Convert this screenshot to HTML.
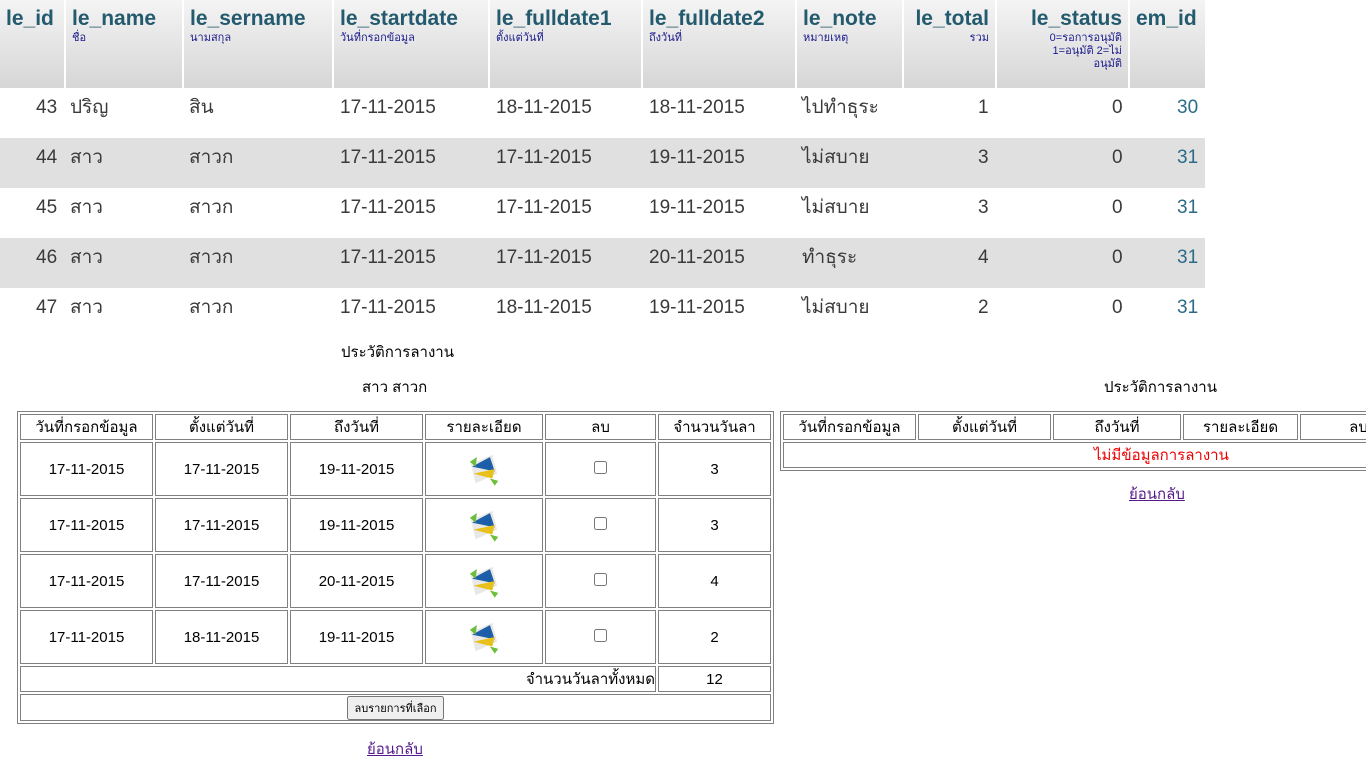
<!DOCTYPE html>
<html><head><meta charset="utf-8">
<style>
*{box-sizing:border-box}
body{margin:0;width:1366px;height:768px;overflow:hidden;background:#fff;font-family:"Liberation Sans","DejaVu Sans",sans-serif;position:relative}
.a{position:absolute}
.hd{position:absolute;top:0;height:88px;background:linear-gradient(#f4f4f4,#d6d6d6);color:#235a6e;font-weight:bold;font-size:21px;padding:6px 6px 0 6px;line-height:26px;white-space:nowrap}
.hd small{display:block;font-size:11px;color:#1a1a8c;font-weight:normal;line-height:13px}
.row{position:absolute;left:0;width:1205px;height:50px}
.c{position:absolute;font-size:19px;color:#3a3a3a;line-height:50px;white-space:nowrap}
table.t{position:absolute;border:1px solid #808080;border-collapse:separate;border-spacing:2px;font-size:15px;color:#000}
table.t td{border:1px solid #808080;text-align:center;padding:0}
.ic{display:inline-block;width:36px;height:38px;position:relative;vertical-align:middle}
a{color:#551a8b;font-size:15px}
</style></head><body>
<div class="hd" style="left:0;width:64px">le_id</div>
<div class="hd" style="left:66px;width:116px">le_name<small>ชื่อ</small></div>
<div class="hd" style="left:184px;width:148px">le_sername<small>นามสกุล</small></div>
<div class="hd" style="left:334px;width:154px">le_startdate<small>วันที่กรอกข้อมูล</small></div>
<div class="hd" style="left:490px;width:151px">le_fulldate1<small>ตั้งแต่วันที่</small></div>
<div class="hd" style="left:643px;width:152px">le_fulldate2<small>ถึงวันที่</small></div>
<div class="hd" style="left:797px;width:105px">le_note<small>หมายเหตุ</small></div>
<div class="hd" style="left:904px;width:91px;text-align:right">le_total<small>รวม</small></div>
<div class="hd" style="left:997px;width:131px;text-align:right">le_status<small>0=รอการอนุมัติ<br>1=อนุมัติ 2=ไม่<br>อนุมัติ</small></div>
<div class="hd" style="left:1130px;width:75px">em_id</div>

<div class="row" style="top:88px;background:#fff"></div>
<div class="row" style="top:138px;background:#e0e0e0"></div>
<div class="row" style="top:188px;background:#fff"></div>
<div class="row" style="top:238px;background:#e0e0e0"></div>
<div class="row" style="top:288px;background:#fff"></div>

<div class="c" style="top:83px;left:36px">43</div><div class="c" style="top:83px;left:70px">ปริญ</div><div class="c" style="top:83px;left:189px">สิน</div><div class="c" style="top:83px;left:340px">17-11-2015</div><div class="c" style="top:83px;left:496px">18-11-2015</div><div class="c" style="top:83px;left:649px">18-11-2015</div><div class="c" style="top:83px;left:802px">ไปทำธุระ</div><div class="c" style="top:83px;left:978px">1</div><div class="c" style="top:83px;left:1112px">0</div><div class="c" style="top:83px;left:1177px;color:#2b6b86">30</div>
<div class="c" style="top:133px;left:36px">44</div><div class="c" style="top:133px;left:70px">สาว</div><div class="c" style="top:133px;left:189px">สาวก</div><div class="c" style="top:133px;left:340px">17-11-2015</div><div class="c" style="top:133px;left:496px">17-11-2015</div><div class="c" style="top:133px;left:649px">19-11-2015</div><div class="c" style="top:133px;left:802px">ไม่สบาย</div><div class="c" style="top:133px;left:978px">3</div><div class="c" style="top:133px;left:1112px">0</div><div class="c" style="top:133px;left:1177px;color:#2b6b86">31</div>
<div class="c" style="top:183px;left:36px">45</div><div class="c" style="top:183px;left:70px">สาว</div><div class="c" style="top:183px;left:189px">สาวก</div><div class="c" style="top:183px;left:340px">17-11-2015</div><div class="c" style="top:183px;left:496px">17-11-2015</div><div class="c" style="top:183px;left:649px">19-11-2015</div><div class="c" style="top:183px;left:802px">ไม่สบาย</div><div class="c" style="top:183px;left:978px">3</div><div class="c" style="top:183px;left:1112px">0</div><div class="c" style="top:183px;left:1177px;color:#2b6b86">31</div>
<div class="c" style="top:233px;left:36px">46</div><div class="c" style="top:233px;left:70px">สาว</div><div class="c" style="top:233px;left:189px">สาวก</div><div class="c" style="top:233px;left:340px">17-11-2015</div><div class="c" style="top:233px;left:496px">17-11-2015</div><div class="c" style="top:233px;left:649px">20-11-2015</div><div class="c" style="top:233px;left:802px">ทำธุระ</div><div class="c" style="top:233px;left:978px">4</div><div class="c" style="top:233px;left:1112px">0</div><div class="c" style="top:233px;left:1177px;color:#2b6b86">31</div>
<div class="c" style="top:283px;left:36px">47</div><div class="c" style="top:283px;left:70px">สาว</div><div class="c" style="top:283px;left:189px">สาวก</div><div class="c" style="top:283px;left:340px">17-11-2015</div><div class="c" style="top:283px;left:496px">18-11-2015</div><div class="c" style="top:283px;left:649px">19-11-2015</div><div class="c" style="top:283px;left:802px">ไม่สบาย</div><div class="c" style="top:283px;left:978px">2</div><div class="c" style="top:283px;left:1112px">0</div><div class="c" style="top:283px;left:1177px;color:#2b6b86">31</div>

<div class="a" style="top:340px;left:341px;font-size:15px">ประวัติการลางาน</div>
<div class="a" style="top:375px;left:362px;font-size:15px">สาว สาวก</div>
<div class="a" style="top:375px;left:1104px;font-size:15px">ประวัติการลางาน</div>

<table class="t" style="left:17px;top:411px;width:757px">
<tr style="height:22px"><td style="width:133px">วันที่กรอกข้อมูล</td><td style="width:133px">ตั้งแต่วันที่</td><td style="width:133px">ถึงวันที่</td><td style="width:118px">รายละเอียด</td><td style="width:111px">ลบ</td><td>จำนวนวันลา</td></tr>
<tr style="height:54px"><td>17-11-2015</td><td>17-11-2015</td><td>19-11-2015</td><td><svg class="ic" viewBox="0 0 30 32"><path d="M4 12 L22 4 L26 20 L8 28Z" fill="#e8e8e8"/><path d="M5 14 L20 6 L24 18 Z" fill="#1c5fa8"/><path d="M6 20 L24 16 L22 24 Z" fill="#e8c21a"/><path d="M3 10 L9 6 L8 14Z M20 24 L27 26 L24 30Z" fill="#6cbf3a"/></svg></td><td><input type="checkbox" style="margin:0"></td><td>3</td></tr>
<tr style="height:54px"><td>17-11-2015</td><td>17-11-2015</td><td>19-11-2015</td><td><svg class="ic" viewBox="0 0 30 32"><path d="M4 12 L22 4 L26 20 L8 28Z" fill="#e8e8e8"/><path d="M5 14 L20 6 L24 18 Z" fill="#1c5fa8"/><path d="M6 20 L24 16 L22 24 Z" fill="#e8c21a"/><path d="M3 10 L9 6 L8 14Z M20 24 L27 26 L24 30Z" fill="#6cbf3a"/></svg></td><td><input type="checkbox" style="margin:0"></td><td>3</td></tr>
<tr style="height:54px"><td>17-11-2015</td><td>17-11-2015</td><td>20-11-2015</td><td><svg class="ic" viewBox="0 0 30 32"><path d="M4 12 L22 4 L26 20 L8 28Z" fill="#e8e8e8"/><path d="M5 14 L20 6 L24 18 Z" fill="#1c5fa8"/><path d="M6 20 L24 16 L22 24 Z" fill="#e8c21a"/><path d="M3 10 L9 6 L8 14Z M20 24 L27 26 L24 30Z" fill="#6cbf3a"/></svg></td><td><input type="checkbox" style="margin:0"></td><td>4</td></tr>
<tr style="height:54px"><td>17-11-2015</td><td>18-11-2015</td><td>19-11-2015</td><td><svg class="ic" viewBox="0 0 30 32"><path d="M4 12 L22 4 L26 20 L8 28Z" fill="#e8e8e8"/><path d="M5 14 L20 6 L24 18 Z" fill="#1c5fa8"/><path d="M6 20 L24 16 L22 24 Z" fill="#e8c21a"/><path d="M3 10 L9 6 L8 14Z M20 24 L27 26 L24 30Z" fill="#6cbf3a"/></svg></td><td><input type="checkbox" style="margin:0"></td><td>2</td></tr>
<tr style="height:25px"><td colspan="5" style="text-align:right">จำนวนวันลาทั้งหมด</td><td>12</td></tr>
<tr style="height:27px"><td colspan="6"><button style="font-size:11px;padding:1px 5px;font-family:inherit">ลบรายการที่เลือก</button></td></tr>
</table>

<table class="t" style="left:780px;top:411px;width:640px">
<tr style="height:22px"><td style="width:133px">วันที่กรอกข้อมูล</td><td style="width:133px">ตั้งแต่วันที่</td><td style="width:128px">ถึงวันที่</td><td style="width:115px">รายละเอียด</td><td>ลบ</td></tr>
<tr style="height:22px"><td colspan="5" style="color:#e00;text-align:left;padding-left:310px">ไม่มีข้อมูลการลางาน</td></tr>
</table>

<a class="a" style="top:482px;left:1129px" href="#">ย้อนกลับ</a>
<a class="a" style="top:737px;left:367px" href="#">ย้อนกลับ</a>
</body></html>
